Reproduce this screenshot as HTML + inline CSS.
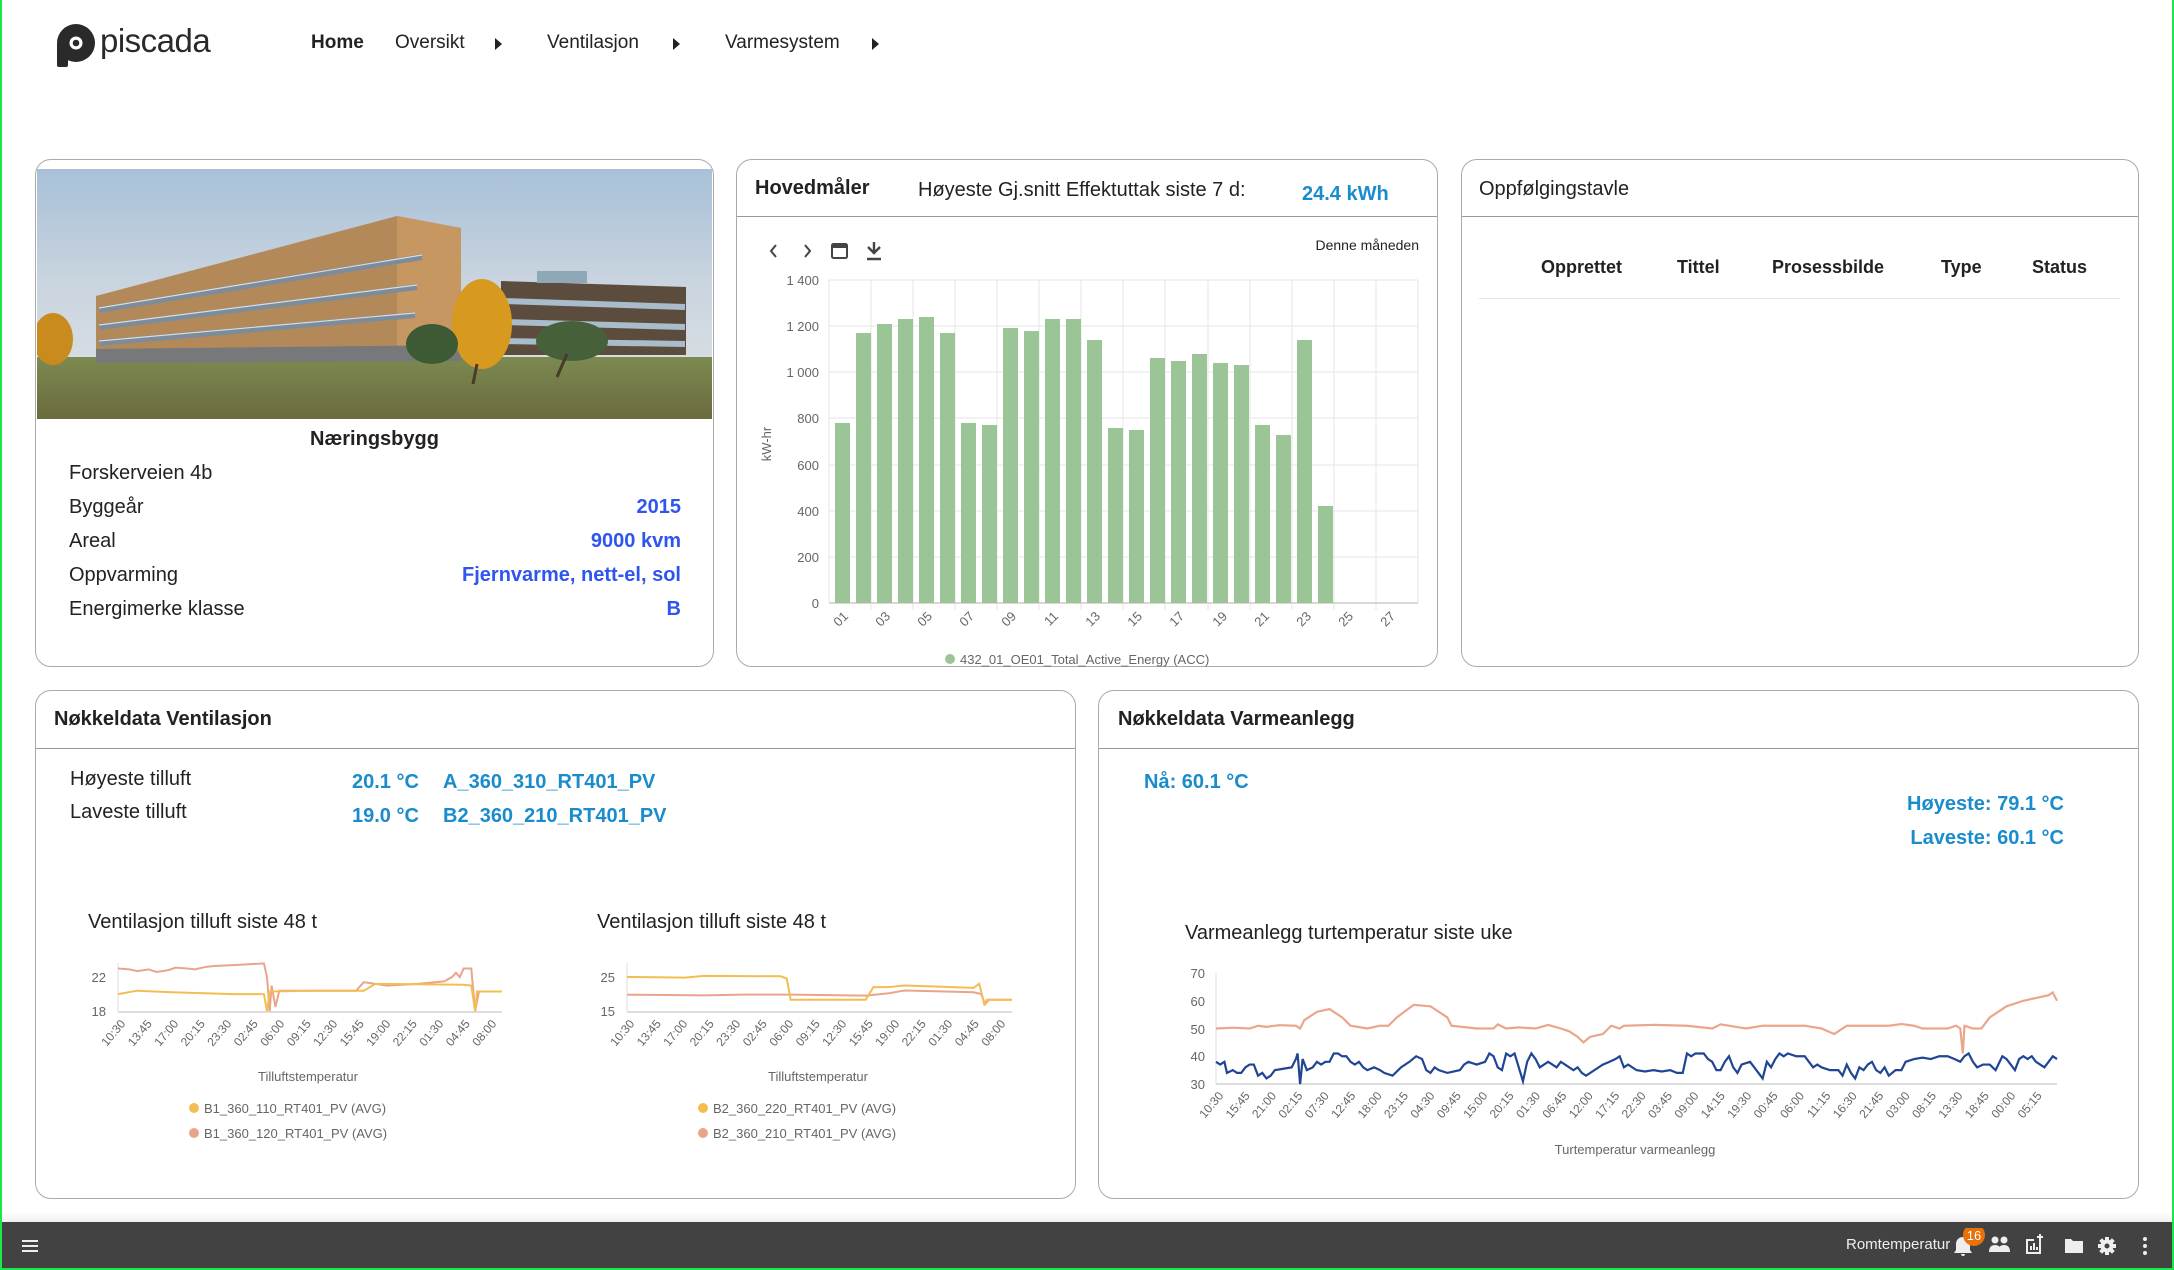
<!DOCTYPE html>
<html><head><meta charset="utf-8">
<style>
*{margin:0;padding:0;box-sizing:border-box}
body{width:2174px;height:1270px;position:relative;background:#fff;font-family:"Liberation Sans",Arial,sans-serif;color:#222;overflow:hidden}
.a{position:absolute;white-space:nowrap}
.panel{position:absolute;border:1.5px solid #aaa;border-radius:16px;background:#fff}
.hdr{position:absolute;left:0;right:0;border-bottom:1.5px solid #999}
.blue{color:#1a8ccc;font-weight:bold}
.vblue{color:#2f55f0;font-weight:bold}
.nav{font-size:19px;top:32px}
.lbl{font-size:20px}
</style></head><body>
<div class="a" style="left:0;top:0;width:2px;height:1270px;background:#1be64a"></div>
<div class="a" style="right:0;top:0;width:2px;height:1270px;background:#1be64a"></div>
<div class="a" style="left:0;bottom:0;width:2174px;height:2px;background:#1be64a"></div>

<svg class="a" style="left:54px;top:22px" width="170" height="46" viewBox="0 0 170 46">
<circle cx="22" cy="21" r="19" fill="#2a2a2a"/>
<rect x="3" y="21" width="11" height="24" rx="2" fill="#2a2a2a"/>
<circle cx="22" cy="21" r="6.5" fill="#fff"/>
<circle cx="22" cy="21" r="3.3" fill="#2a2a2a"/>
<text x="46" y="30" font-family="Liberation Sans" font-size="33" fill="#2a2a2a" letter-spacing="-0.5">piscada</text>
</svg>

<div class="a nav" style="left:311px;font-weight:bold;color:#222">Home</div>
<div class="a nav" style="left:395px">Oversikt</div>
<div class="a" style="left:495px;top:38px;border-left:7px solid #222;border-top:6px solid transparent;border-bottom:6px solid transparent"></div>
<div class="a nav" style="left:547px">Ventilasjon</div>
<div class="a" style="left:673px;top:38px;border-left:7px solid #222;border-top:6px solid transparent;border-bottom:6px solid transparent"></div>
<div class="a nav" style="left:725px">Varmesystem</div>
<div class="a" style="left:872px;top:38px;border-left:7px solid #222;border-top:6px solid transparent;border-bottom:6px solid transparent"></div>

<div class="panel" style="left:35px;top:159px;width:679px;height:508px;overflow:hidden">
<svg class="a" style="left:1px;top:9px" width="675" height="250" viewBox="0 0 675 250">
<defs><linearGradient id="sky" x1="0" y1="0" x2="0" y2="1"><stop offset="0" stop-color="#a8c0d8"/><stop offset="0.45" stop-color="#c9d4df"/><stop offset="1" stop-color="#dfe3e6"/></linearGradient>
<linearGradient id="gr" x1="0" y1="0" x2="0" y2="1"><stop offset="0" stop-color="#7c8a50"/><stop offset="1" stop-color="#6b6a3e"/></linearGradient></defs>
<rect width="675" height="250" fill="url(#sky)"/>
<rect x="0" y="188" width="675" height="62" fill="url(#gr)"/>
<polygon points="464,112 649,118 649,186 464,186" fill="#5b4c3e"/>
<rect x="500" y="102" width="50" height="12" fill="#8ea8b8"/>
<g stroke="#a9bccb" stroke-width="6"><line x1="466" y1="132" x2="648" y2="138"/><line x1="466" y1="153" x2="648" y2="158"/><line x1="466" y1="172" x2="648" y2="175"/></g>
<polygon points="59,127 360,47 424,59 424,190 59,192" fill="#b4895a"/>
<polygon points="360,47 424,59 424,190 360,188" fill="#c69760"/>
<polygon points="59,180 424,176 424,192 59,194" fill="#77787a"/>
<g stroke="#7d8c9a" stroke-width="6"><line x1="62" y1="141" x2="385" y2="88"/><line x1="62" y1="158" x2="380" y2="118"/><line x1="62" y1="174" x2="378" y2="146"/></g>
<g stroke="#d8dde2" stroke-width="1.2"><line x1="62" y1="139" x2="385" y2="86"/><line x1="62" y1="156" x2="380" y2="116"/><line x1="62" y1="172" x2="378" y2="144"/></g>
<ellipse cx="445" cy="155" rx="30" ry="45" fill="#d7991e"/>
<ellipse cx="395" cy="175" rx="26" ry="20" fill="#3e5a34"/>
<ellipse cx="535" cy="172" rx="36" ry="20" fill="#46603a"/>
<ellipse cx="16" cy="170" rx="20" ry="26" fill="#c98a1e"/>
<line x1="440" y1="195" x2="436" y2="215" stroke="#4a3a2a" stroke-width="3"/>
<line x1="530" y1="185" x2="520" y2="208" stroke="#4a3a2a" stroke-width="3"/>
</svg>
<div class="a" style="left:0;right:0;top:268px;text-align:center;font-size:20px;font-weight:bold">Næringsbygg</div>
<div class="a lbl" style="left:33px;top:302px">Forskerveien 4b</div>
<div class="a lbl" style="left:33px;top:336px">Byggeår</div>
<div class="a lbl vblue" style="right:32px;top:336px">2015</div>
<div class="a lbl" style="left:33px;top:370px">Areal</div>
<div class="a lbl vblue" style="right:32px;top:370px">9000 kvm</div>
<div class="a lbl" style="left:33px;top:404px">Oppvarming</div>
<div class="a lbl vblue" style="right:32px;top:404px">Fjernvarme, nett-el, sol</div>
<div class="a lbl" style="left:33px;top:438px">Energimerke klasse</div>
<div class="a lbl vblue" style="right:32px;top:438px">B</div>
</div>

<div class="panel" style="left:736px;top:159px;width:702px;height:508px">
<div class="hdr" style="top:0;height:57px"></div>
<div class="a" style="left:18px;top:17px;font-size:20px;font-weight:bold">Hovedmåler</div>
<div class="a" style="left:181px;top:19px;font-size:20px">Høyeste Gj.snitt Effektuttak siste 7 d:</div>
<div class="a blue" style="left:565px;top:23px;font-size:20px">24.4 kWh</div>
<div class="a" style="right:18px;top:77px;font-size:14px">Denne måneden</div>
</div>
<svg class="a" style="left:736px;top:159px" width="702" height="508" viewBox="736 159 702 508" font-family="Liberation Sans">
<g stroke="#444" stroke-width="2" fill="none"><polyline points="776,245 771,251 776,257"/><polyline points="805,245 810,251 805,257"/></g>
<rect x="832" y="244" width="15" height="14" rx="1.5" fill="none" stroke="#444" stroke-width="2"/><rect x="832" y="244" width="15" height="4" fill="#444"/>
<path d="M874 242 v10 M868 247 l6 6 6-6 M867 259 h14" stroke="#444" stroke-width="2.4" fill="none"/>
<g stroke="#e6e6e6" stroke-width="1">
<line x1="829" y1="280" x2="1418" y2="280"/><line x1="829" y1="326" x2="1418" y2="326"/><line x1="829" y1="372" x2="1418" y2="372"/><line x1="829" y1="418" x2="1418" y2="418"/><line x1="829" y1="465" x2="1418" y2="465"/><line x1="829" y1="511" x2="1418" y2="511"/><line x1="829" y1="557" x2="1418" y2="557"/>
<line x1="829" y1="280" x2="829" y2="603"/><line x1="871" y1="280" x2="871" y2="610"/><line x1="913" y1="280" x2="913" y2="610"/><line x1="955" y1="280" x2="955" y2="610"/><line x1="997" y1="280" x2="997" y2="610"/><line x1="1039" y1="280" x2="1039" y2="610"/><line x1="1081" y1="280" x2="1081" y2="610"/><line x1="1123" y1="280" x2="1123" y2="610"/><line x1="1165" y1="280" x2="1165" y2="610"/><line x1="1208" y1="280" x2="1208" y2="610"/><line x1="1250" y1="280" x2="1250" y2="610"/><line x1="1292" y1="280" x2="1292" y2="610"/><line x1="1334" y1="280" x2="1334" y2="610"/><line x1="1376" y1="280" x2="1376" y2="610"/><line x1="1418" y1="280" x2="1418" y2="603"/>
</g>
<line x1="829" y1="603" x2="1418" y2="603" stroke="#ccc" stroke-width="1.5"/>
<g fill="#9bc596">
<rect x="835" y="423" width="15" height="180"/><rect x="856" y="333" width="15" height="270"/><rect x="877" y="324" width="15" height="279"/><rect x="898" y="319" width="15" height="284"/><rect x="919" y="317" width="15" height="286"/><rect x="940" y="333" width="15" height="270"/><rect x="961" y="423" width="15" height="180"/><rect x="982" y="425" width="15" height="178"/><rect x="1003" y="328" width="15" height="275"/><rect x="1024" y="331" width="15" height="272"/><rect x="1045" y="319" width="15" height="284"/><rect x="1066" y="319" width="15" height="284"/><rect x="1087" y="340" width="15" height="263"/><rect x="1108" y="428" width="15" height="175"/><rect x="1129" y="430" width="15" height="173"/><rect x="1150" y="358" width="15" height="245"/><rect x="1171" y="361" width="15" height="242"/><rect x="1192" y="354" width="15" height="249"/><rect x="1213" y="363" width="15" height="240"/><rect x="1234" y="365" width="15" height="238"/><rect x="1255" y="425" width="15" height="178"/><rect x="1276" y="435" width="15" height="168"/><rect x="1297" y="340" width="15" height="263"/><rect x="1318" y="506" width="15" height="97"/>
</g>
<g font-size="13" fill="#666" text-anchor="end">
<text x="819" y="285">1 400</text><text x="819" y="331">1 200</text><text x="819" y="377">1 000</text><text x="819" y="423">800</text><text x="819" y="470">600</text><text x="819" y="516">400</text><text x="819" y="562">200</text><text x="819" y="608">0</text>
</g>
<text transform="translate(771,444) rotate(-90)" font-size="13" fill="#666" text-anchor="middle">kW-hr</text>
<g font-size="13" fill="#666" text-anchor="end">
<text transform="translate(849,617) rotate(-45)">01</text><text transform="translate(891,617) rotate(-45)">03</text><text transform="translate(933,617) rotate(-45)">05</text><text transform="translate(975,617) rotate(-45)">07</text><text transform="translate(1017,617) rotate(-45)">09</text><text transform="translate(1059,617) rotate(-45)">11</text><text transform="translate(1101,617) rotate(-45)">13</text><text transform="translate(1143,617) rotate(-45)">15</text><text transform="translate(1185,617) rotate(-45)">17</text><text transform="translate(1228,617) rotate(-45)">19</text><text transform="translate(1270,617) rotate(-45)">21</text><text transform="translate(1312,617) rotate(-45)">23</text><text transform="translate(1354,617) rotate(-45)">25</text><text transform="translate(1396,617) rotate(-45)">27</text>
</g>
<circle cx="950" cy="659" r="5" fill="#9bc596"/>
<text x="960" y="664" font-size="13" fill="#666">432_01_OE01_Total_Active_Energy (ACC)</text>
</svg>

<div class="panel" style="left:1461px;top:159px;width:678px;height:508px">
<div class="hdr" style="top:0;height:57px"></div>
<div class="a" style="left:17px;top:18px;font-size:20px">Oppfølgingstavle</div>
<div class="a" style="left:79px;top:97px;font-size:18px;font-weight:bold">Opprettet</div>
<div class="a" style="left:215px;top:97px;font-size:18px;font-weight:bold">Tittel</div>
<div class="a" style="left:310px;top:97px;font-size:18px;font-weight:bold">Prosessbilde</div>
<div class="a" style="left:479px;top:97px;font-size:18px;font-weight:bold">Type</div>
<div class="a" style="left:570px;top:97px;font-size:18px;font-weight:bold">Status</div>
<div class="a" style="left:17px;top:138px;width:641px;height:1px;background:#e3e3e3"></div>
</div>

<div class="panel" style="left:35px;top:690px;width:1041px;height:509px">
<div class="hdr" style="top:0;height:58px"></div>
<div class="a" style="left:18px;top:17px;font-size:20px;font-weight:bold">Nøkkeldata Ventilasjon</div>
<div class="a lbl" style="left:34px;top:77px">Høyeste tilluft</div>
<div class="a lbl" style="left:34px;top:110px">Laveste tilluft</div>
<div class="a lbl blue" style="left:316px;top:80px">20.1 °C</div>
<div class="a lbl blue" style="left:407px;top:80px">A_360_310_RT401_PV</div>
<div class="a lbl blue" style="left:316px;top:114px">19.0 °C</div>
<div class="a lbl blue" style="left:407px;top:114px">B2_360_210_RT401_PV</div>
<div class="a lbl" style="left:52px;top:220px">Ventilasjon tilluft siste 48 t</div>
<div class="a lbl" style="left:561px;top:220px">Ventilasjon tilluft siste 48 t</div>
</div>
<svg class="a" style="left:0;top:0" width="2174" height="1270" font-family="Liberation Sans">
<line x1="118" y1="963" x2="118" y2="1012" stroke="#ddd"/>
<line x1="118" y1="1012" x2="502" y2="1012" stroke="#ddd" stroke-width="2"/>
<g font-size="13" fill="#666" text-anchor="end"><text x="106" y="982">22</text><text x="106" y="1016">18</text></g>
<svg x="118" y="963" width="384" height="49" viewBox="0 -23.65 1000 5.75" preserveAspectRatio="none" overflow="visible">
<polyline vector-effect="non-scaling-stroke" fill="none" stroke="#e9a58a" stroke-width="2" points="0,-23 30,-22.9 50,-22.7 80,-22.9 100,-22.6 130,-22.8 150,-23.1 180,-23 200,-22.9 230,-23.2 250,-23.3 300,-23.4 340,-23.5 380,-23.6 388,-22 395,-18 400,-21 410,-18.5 420,-20.4 620,-20.4 640,-21.4 700,-21 780,-21.2 850,-21.5 870,-22 880,-22.5 890,-22 900,-23 920,-23 930,-18 940,-20.3 1000,-20.3"/>
<polyline vector-effect="non-scaling-stroke" fill="none" stroke="#f4bd52" stroke-width="2" points="0,-20 50,-20.4 150,-20.2 300,-20 380,-20 388,-18 395,-20.3 500,-20.4 640,-20.4 670,-21.2 900,-21.1 920,-21 930,-18 935,-20.3 1000,-20.3"/>
</svg>
<g font-size="12" fill="#666" text-anchor="end">
<text transform="translate(126,1024) rotate(-50)">10:30</text><text transform="translate(152.5,1024) rotate(-50)">13:45</text><text transform="translate(179,1024) rotate(-50)">17:00</text><text transform="translate(205.5,1024) rotate(-50)">20:15</text><text transform="translate(232,1024) rotate(-50)">23:30</text><text transform="translate(258.5,1024) rotate(-50)">02:45</text><text transform="translate(285,1024) rotate(-50)">06:00</text><text transform="translate(311.5,1024) rotate(-50)">09:15</text><text transform="translate(338,1024) rotate(-50)">12:30</text><text transform="translate(364.5,1024) rotate(-50)">15:45</text><text transform="translate(391,1024) rotate(-50)">19:00</text><text transform="translate(417.5,1024) rotate(-50)">22:15</text><text transform="translate(444,1024) rotate(-50)">01:30</text><text transform="translate(470.5,1024) rotate(-50)">04:45</text><text transform="translate(497,1024) rotate(-50)">08:00</text>
</g>
<text x="308" y="1081" font-size="13" fill="#666" text-anchor="middle">Tilluftstemperatur</text>
<circle cx="194" cy="1108" r="5" fill="#f4bd52"/><text x="204" y="1113" font-size="13" fill="#666">B1_360_110_RT401_PV (AVG)</text>
<circle cx="194" cy="1133" r="5" fill="#e9a58a"/><text x="204" y="1138" font-size="13" fill="#666">B1_360_120_RT401_PV (AVG)</text>
<line x1="627" y1="963" x2="627" y2="1012" stroke="#ddd"/>
<line x1="627" y1="1012" x2="1012" y2="1012" stroke="#ddd" stroke-width="2"/>
<g font-size="13" fill="#666" text-anchor="end"><text x="615" y="982">25</text><text x="615" y="1016">15</text></g>
<svg x="627" y="963" width="385" height="49" viewBox="0 -29.1 1000 14.4" preserveAspectRatio="none" overflow="visible">
<polyline vector-effect="non-scaling-stroke" fill="none" stroke="#e9a58a" stroke-width="2" points="0,-19.8 100,-19.7 200,-19.6 300,-19.8 430,-19.8 620,-19.5 680,-20.2 720,-21 800,-20.8 900,-20.5 920,-20 930,-17 940,-18.3 1000,-18.3"/>
<polyline vector-effect="non-scaling-stroke" fill="none" stroke="#f4bd52" stroke-width="2" points="0,-25 150,-24.8 200,-25.3 400,-25.2 415,-24.5 425,-18.3 620,-18.3 640,-22 680,-22 720,-22.5 800,-22.2 900,-21.8 915,-23 928,-17 935,-18.3 1000,-18.3"/>
</svg>
<g font-size="12" fill="#666" text-anchor="end">
<text transform="translate(635,1024) rotate(-50)">10:30</text><text transform="translate(661.5,1024) rotate(-50)">13:45</text><text transform="translate(688,1024) rotate(-50)">17:00</text><text transform="translate(714.5,1024) rotate(-50)">20:15</text><text transform="translate(741,1024) rotate(-50)">23:30</text><text transform="translate(767.5,1024) rotate(-50)">02:45</text><text transform="translate(794,1024) rotate(-50)">06:00</text><text transform="translate(820.5,1024) rotate(-50)">09:15</text><text transform="translate(847,1024) rotate(-50)">12:30</text><text transform="translate(873.5,1024) rotate(-50)">15:45</text><text transform="translate(900,1024) rotate(-50)">19:00</text><text transform="translate(926.5,1024) rotate(-50)">22:15</text><text transform="translate(953,1024) rotate(-50)">01:30</text><text transform="translate(979.5,1024) rotate(-50)">04:45</text><text transform="translate(1006,1024) rotate(-50)">08:00</text>
</g>
<text x="818" y="1081" font-size="13" fill="#666" text-anchor="middle">Tilluftstemperatur</text>
<circle cx="703" cy="1108" r="5" fill="#f4bd52"/><text x="713" y="1113" font-size="13" fill="#666">B2_360_220_RT401_PV (AVG)</text>
<circle cx="703" cy="1133" r="5" fill="#e9a58a"/><text x="713" y="1138" font-size="13" fill="#666">B2_360_210_RT401_PV (AVG)</text>
</svg>

<div class="panel" style="left:1098px;top:690px;width:1041px;height:509px">
<div class="hdr" style="top:0;height:58px"></div>
<div class="a" style="left:19px;top:17px;font-size:20px;font-weight:bold">Nøkkeldata Varmeanlegg</div>
<div class="a lbl blue" style="left:45px;top:80px">Nå: 60.1 °C</div>
<div class="a lbl blue" style="right:74px;top:102px">Høyeste: 79.1 °C</div>
<div class="a lbl blue" style="right:74px;top:136px">Laveste: 60.1 °C</div>
<div class="a lbl" style="left:86px;top:231px">Varmeanlegg turtemperatur siste uke</div>
</div>
<svg class="a" style="left:0;top:0" width="2174" height="1270" font-family="Liberation Sans">
<line x1="1216" y1="973" x2="1216" y2="1084" stroke="#ddd"/>
<line x1="1216" y1="1084" x2="2057" y2="1084" stroke="#ddd" stroke-width="2"/>
<g font-size="13" fill="#666" text-anchor="end"><text x="1205" y="978">70</text><text x="1205" y="1006">60</text><text x="1205" y="1034">50</text><text x="1205" y="1061">40</text><text x="1205" y="1089">30</text></g>
<svg x="1216" y="973" width="841" height="111" viewBox="0 -70 1000 40" preserveAspectRatio="none" overflow="visible">
<polyline vector-effect="non-scaling-stroke" fill="none" stroke="#eaa68b" stroke-width="2.2" points="0,-50 20,-50.3 40,-50 50,-51 60,-50.6 75,-51.2 95,-51 100,-50 105,-53 120,-56 135,-57 150,-54 160,-51 180,-50 195,-51 205,-51 215,-54 235,-58.5 255,-58 275,-54 280,-51 310,-50 330,-50 335,-51.5 345,-50 360,-50.4 380,-50 395,-51.3 410,-50 420,-49 430,-47 437,-45 445,-47 460,-48 470,-51 480,-50 485,-51 520,-51.3 560,-51 590,-50 600,-51.5 630,-50 650,-51 700,-51 720,-50 735,-48 740,-49 750,-51 800,-51 815,-51.6 830,-51 840,-50 870,-50 880,-51 885,-50 888,-41 890,-51 900,-50 910,-50 920,-54 940,-58 960,-60 990,-62 995,-63 1000,-60"/>
<polyline vector-effect="non-scaling-stroke" fill="none" stroke="#1f4594" stroke-width="2.2" points="0,-38 5,-37 10,-38 13,-34 20,-35 25,-34 30,-34 35,-36 40,-37 45,-37 50,-33 55,-34 60,-32 65,-33 70,-35 80,-35.5 90,-36 95,-39 97,-41 100,-30 103,-39 108,-35 115,-36 120,-38 125,-37 130,-38 135,-38 140,-41 145,-41 150,-40 155,-40 160,-38 165,-37 170,-38 175,-36 180,-35 188,-36 195,-35 200,-34 210,-33 220,-36 230,-38 238,-40 245,-39 250,-35 255,-34 260,-36 265,-35 275,-34 290,-35 295,-37 300,-38 310,-37 320,-38 325,-41 330,-40 335,-36 340,-35 345,-41 350,-40 355,-41 360,-36 365,-31 370,-38 375,-41 380,-39 385,-36 395,-38 400,-37 405,-36 410,-38 415,-37 425,-35 430,-36 435,-34 440,-33 450,-35 460,-37 468,-38 475,-39 480,-40 485,-36 490,-37 500,-35 510,-34.5 520,-35 530,-34.5 540,-35 548,-34 555,-34 560,-41 565,-40 570,-41 580,-41 585,-39 590,-38 595,-35 600,-35 605,-38 610,-40 615,-36 620,-34 625,-37 635,-38 640,-36 645,-34 650,-32 655,-38 660,-36 665,-39 670,-41 675,-40 680,-41 690,-40 700,-40 705,-38 710,-36 715,-37 720,-36 730,-35 740,-35 745,-33 750,-37 755,-34 760,-32 765,-36 770,-35 775,-37 780,-38 785,-35 790,-34 795,-36 800,-33 808,-35 815,-35 820,-38 830,-39 840,-39.5 850,-39 860,-40 870,-40 878,-39 885,-38 890,-40 895,-41 900,-38 905,-36 912,-37 920,-37 927,-35 935,-40 940,-39 945,-37 950,-35 955,-39 960,-40 965,-39 970,-40 975,-38 980,-37 985,-36 990,-38 995,-40 1000,-39"/>
</svg>
<g font-size="12" fill="#666" text-anchor="end">
<text transform="translate(1224,1096) rotate(-50)">10:30</text><text transform="translate(1250.4,1096) rotate(-50)">15:45</text><text transform="translate(1276.8,1096) rotate(-50)">21:00</text><text transform="translate(1303.2,1096) rotate(-50)">02:15</text><text transform="translate(1329.6,1096) rotate(-50)">07:30</text><text transform="translate(1356,1096) rotate(-50)">12:45</text><text transform="translate(1382.4,1096) rotate(-50)">18:00</text><text transform="translate(1408.8,1096) rotate(-50)">23:15</text><text transform="translate(1435.2,1096) rotate(-50)">04:30</text><text transform="translate(1461.6,1096) rotate(-50)">09:45</text><text transform="translate(1488,1096) rotate(-50)">15:00</text><text transform="translate(1514.4,1096) rotate(-50)">20:15</text><text transform="translate(1540.8,1096) rotate(-50)">01:30</text><text transform="translate(1567.2,1096) rotate(-50)">06:45</text><text transform="translate(1593.6,1096) rotate(-50)">12:00</text><text transform="translate(1620,1096) rotate(-50)">17:15</text><text transform="translate(1646.4,1096) rotate(-50)">22:30</text><text transform="translate(1672.8,1096) rotate(-50)">03:45</text><text transform="translate(1699.2,1096) rotate(-50)">09:00</text><text transform="translate(1725.6,1096) rotate(-50)">14:15</text><text transform="translate(1752,1096) rotate(-50)">19:30</text><text transform="translate(1778.4,1096) rotate(-50)">00:45</text><text transform="translate(1804.8,1096) rotate(-50)">06:00</text><text transform="translate(1831.2,1096) rotate(-50)">11:15</text><text transform="translate(1857.6,1096) rotate(-50)">16:30</text><text transform="translate(1884,1096) rotate(-50)">21:45</text><text transform="translate(1910.4,1096) rotate(-50)">03:00</text><text transform="translate(1936.8,1096) rotate(-50)">08:15</text><text transform="translate(1963.2,1096) rotate(-50)">13:30</text><text transform="translate(1989.6,1096) rotate(-50)">18:45</text><text transform="translate(2016,1096) rotate(-50)">00:00</text><text transform="translate(2042.4,1096) rotate(-50)">05:15</text>
</g>
<text x="1635" y="1154" font-size="13" fill="#666" text-anchor="middle">Turtemperatur varmeanlegg</text>
</svg>

<div class="a" style="left:2px;top:1212px;width:2170px;height:10px;background:linear-gradient(#fff,#f0f0f0)"></div>
<div class="a" style="left:2px;top:1222px;width:2170px;height:46px;background:#424242"></div>
<svg class="a" style="left:20px;top:1238px" width="20" height="16"><g stroke="#eee" stroke-width="2"><line x1="2" y1="3" x2="18" y2="3"/><line x1="2" y1="8" x2="18" y2="8"/><line x1="2" y1="13" x2="18" y2="13"/></g></svg>
<div class="a" style="left:1846px;top:1236px;font-size:15px;color:#eee">Romtemperatur</div>
<svg class="a" style="left:1950px;top:1228px" width="220" height="36" viewBox="1950 1228 220 36">
<path d="M1963 1237 c-4 0 -7 3 -7 7 v6 l-2 3 h18 l-2 -3 v-6 c0 -4 -3 -7 -7 -7z M1961 1254 h4 a2 2 0 0 1 -4 0z" fill="#eee"/>
<circle cx="1974" cy="1235" r="11" fill="#e8710a"/>
<text x="1974" y="1240" font-size="13" fill="#fff" text-anchor="middle" font-family="Liberation Sans">16</text>
<g fill="#eee"><circle cx="1995" cy="1240" r="3.5"/><circle cx="2004" cy="1240" r="3.5"/><path d="M1989 1252 q0 -7 6 -7 q6 0 6 7z M1998 1252 q0 -7 6 -7 q6 0 6 7z"/></g>
<g fill="none" stroke="#eee" stroke-width="2"><path d="M2040 1240 v13 h-13 v-13 h7"/><line x1="2031" y1="1250" x2="2031" y2="1246"/><line x1="2034" y1="1250" x2="2034" y2="1243"/><line x1="2037" y1="1250" x2="2037" y2="1247"/><path d="M2040 1234 v6 M2037 1237 h6"/></g>
<path d="M2065 1239 h6 l2 2 h10 v12 h-18z" fill="#eee"/>
<g transform="translate(2107,1246)"><circle r="6.5" fill="#eee"/><g fill="#eee"><rect x="-2" y="-9" width="4" height="18"/><rect x="-9" y="-2" width="18" height="4"/><rect x="-2" y="-9" width="4" height="18" transform="rotate(45)"/><rect x="-2" y="-9" width="4" height="18" transform="rotate(-45)"/></g><circle r="2.5" fill="#424242"/></g>
<g fill="#eee"><circle cx="2145" cy="1239" r="2"/><circle cx="2145" cy="1246" r="2"/><circle cx="2145" cy="1253" r="2"/></g>
</svg>
</body></html>
